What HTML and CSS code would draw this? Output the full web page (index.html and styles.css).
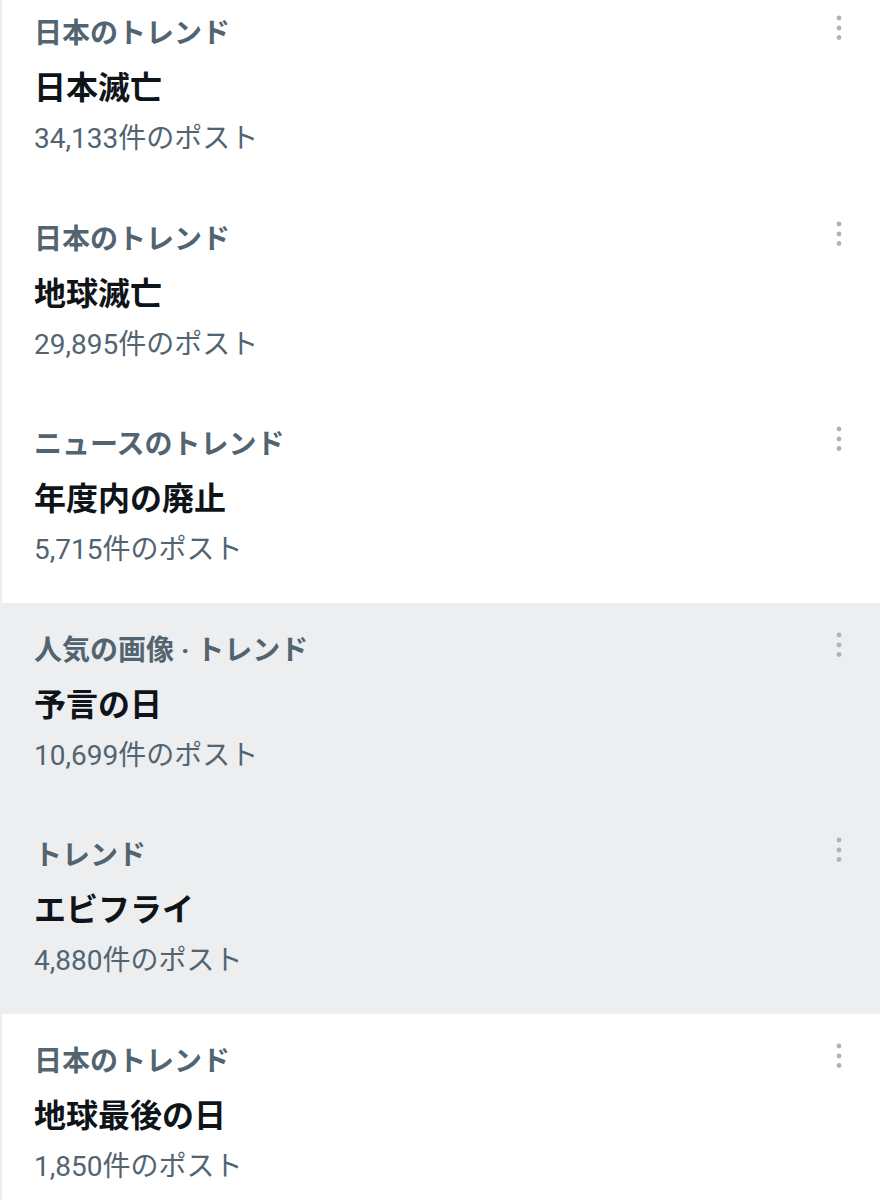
FILE: index.html
```html
<!DOCTYPE html>
<html lang="ja">
<head>
    <meta charset="UTF-8">
    <meta name="viewport" content="width=device-width, initial-scale=1.0">
    <title>トレンド</title>
    <link rel="stylesheet" href="styles.css">
</head>
<body>
    <div class="trends">
        <div class="trend">
            <div class="trend-text">
                <div class="trend-meta">日本のトレンド</div>
                <div class="trend-name">日本滅亡</div>
                <div class="trend-count">34,133件のポスト</div>
            </div>
            <svg class="trend-more" width="8" height="28" viewBox="0 0 8 28"><circle cx="4" cy="4" r="2.4"/><circle cx="4" cy="14" r="2.4"/><circle cx="4" cy="23.5" r="2.4"/></svg>
        </div>
        <div class="trend">
            <div class="trend-text">
                <div class="trend-meta">日本のトレンド</div>
                <div class="trend-name">地球滅亡</div>
                <div class="trend-count">29,895件のポスト</div>
            </div>
            <svg class="trend-more" width="8" height="28" viewBox="0 0 8 28"><circle cx="4" cy="4" r="2.4"/><circle cx="4" cy="14" r="2.4"/><circle cx="4" cy="23.5" r="2.4"/></svg>
        </div>
        <div class="trend">
            <div class="trend-text">
                <div class="trend-meta">ニュースのトレンド</div>
                <div class="trend-name">年度内の廃止</div>
                <div class="trend-count">5,715件のポスト</div>
            </div>
            <svg class="trend-more" width="8" height="28" viewBox="0 0 8 28"><circle cx="4" cy="4" r="2.4"/><circle cx="4" cy="14" r="2.4"/><circle cx="4" cy="23.5" r="2.4"/></svg>
        </div>
        <div class="trend hovered">
            <div class="trend-text">
                <div class="trend-meta">人気の画像 · トレンド</div>
                <div class="trend-name">予言の日</div>
                <div class="trend-count">10,699件のポスト</div>
            </div>
            <svg class="trend-more" width="8" height="28" viewBox="0 0 8 28"><circle cx="4" cy="4" r="2.4"/><circle cx="4" cy="14" r="2.4"/><circle cx="4" cy="23.5" r="2.4"/></svg>
        </div>
        <div class="trend hovered">
            <div class="trend-text">
                <div class="trend-meta">トレンド</div>
                <div class="trend-name">エビフライ</div>
                <div class="trend-count">4,880件のポスト</div>
            </div>
            <svg class="trend-more" width="8" height="28" viewBox="0 0 8 28"><circle cx="4" cy="4" r="2.4"/><circle cx="4" cy="14" r="2.4"/><circle cx="4" cy="23.5" r="2.4"/></svg>
        </div>
        <div class="trend">
            <div class="trend-text">
                <div class="trend-meta">日本のトレンド</div>
                <div class="trend-name">地球最後の日</div>
                <div class="trend-count">1,850件のポスト</div>
            </div>
            <svg class="trend-more" width="8" height="28" viewBox="0 0 8 28"><circle cx="4" cy="4" r="2.4"/><circle cx="4" cy="14" r="2.4"/><circle cx="4" cy="23.5" r="2.4"/></svg>
        </div>
    </div>
</body>
</html>
```

FILE: styles.css
```css
body {
    margin: 0;
    background-color: #fff;
    font-family: Roboto, "Noto Sans CJK JP", sans-serif;
    overflow: hidden;
}

.trends {
    margin-top: -14px;
    border-left: 2px solid #eceef0;
}

.trend {
    display: flex;
    justify-content: space-between;
    align-items: flex-start;
    height: 205.6px;
    box-sizing: border-box;
    padding: 29px 37px 0 32px;
}

.trend.hovered {
    background-color: #eceef0;
}

.trend-meta {
    font-size: 28px;
    line-height: 38px;
    font-weight: bold;
    color: #536471;
}

.trend-name {
    margin-top: 15px;
    font-size: 32px;
    line-height: 40px;
    font-weight: bold;
    color: #0f1419;
}

.trend-count {
    margin-top: 12px;
    font-size: 28px;
    line-height: 38px;
    color: #536471;
}

.trend-more {
    margin-top: -1px;
    fill: #aab4bc;
}
```
